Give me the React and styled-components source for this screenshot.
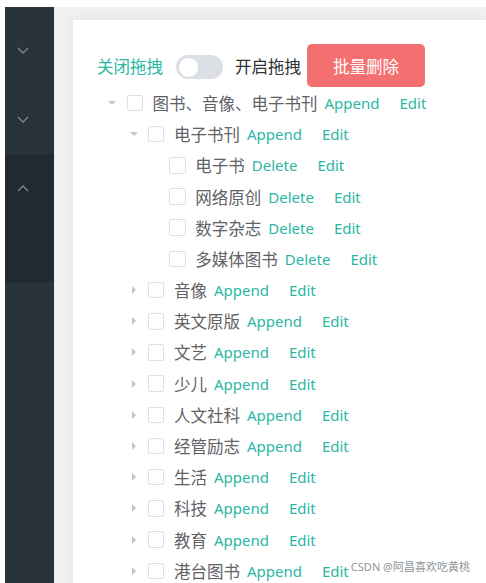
import React, { useState } from "react";
import styled, { createGlobalStyle } from "styled-components";

const GlobalStyle = createGlobalStyle`
  html, body {
    margin: 0;
    padding: 0;
    background: #fff;
    overflow: hidden;
  }
  * {
    box-sizing: border-box;
  }
`;

const TEAL = "#2bb7a3";

const treeData = [
  {
    label: "图书、音像、电子书刊",
    open: true,
    children: [
      {
        label: "电子书刊",
        open: true,
        children: [
          { label: "电子书" },
          { label: "网络原创" },
          { label: "数字杂志" },
          { label: "多媒体图书" },
        ],
      },
      { label: "音像", children: [{ label: "-" }] },
      { label: "英文原版", children: [{ label: "-" }] },
      { label: "文艺", children: [{ label: "-" }] },
      { label: "少儿", children: [{ label: "-" }] },
      { label: "人文社科", children: [{ label: "-" }] },
      { label: "经管励志", children: [{ label: "-" }] },
      { label: "生活", children: [{ label: "-" }] },
      { label: "科技", children: [{ label: "-" }] },
      { label: "教育", children: [{ label: "-" }] },
      { label: "港台图书", children: [{ label: "-" }] },
    ],
  },
];

const Chevron = ({ up }) => (
  <svg width="12" height="7" viewBox="0 0 12 7">
    <polyline
      points={up ? "1,6 6,1 11,6" : "1,1 6,6 11,1"}
      fill="none"
      stroke="#7d868e"
      strokeWidth="1.4"
    />
  </svg>
);

const TreeNode = ({ node, level }) => {
  const hasChildren = !!node.children;
  const isLeaf = level >= 2;
  return (
    <>
      <Row level={level}>
        <Caret>{hasChildren && <Triangle open={node.open} />}</Caret>
        <Checkbox />
        <Label>{node.label}</Label>
        <LinkBtn>{isLeaf ? "Delete" : "Append"}</LinkBtn>
        <LinkBtn>Edit</LinkBtn>
      </Row>
      {node.open &&
        node.children.map((c) => (
          <TreeNode key={c.label} node={c} level={level + 1} />
        ))}
    </>
  );
};

const App = () => {
  const [drag, setDrag] = useState(false);

  return (
    <Page>
      <GlobalStyle />
      <Sidebar>
        <MenuItem>
          <Chevron />
        </MenuItem>
        <MenuItem>
          <Chevron />
        </MenuItem>
        <MenuGroup>
          <MenuItem>
            <Chevron up />
          </MenuItem>
        </MenuGroup>
      </Sidebar>
      <Main>
        <Card>
          <Toolbar>
            <SwitchText active={!drag}>关闭拖拽</SwitchText>
            <Switch on={drag} onClick={() => setDrag(!drag)}>
              <Knob on={drag} />
            </Switch>
            <SwitchText active={drag}>开启拖拽</SwitchText>
            <DangerButton>批量删除</DangerButton>
          </Toolbar>
          <Tree>
            {treeData.map((n) => (
              <TreeNode key={n.label} node={n} level={0} />
            ))}
          </Tree>
        </Card>
      </Main>
      <Watermark>CSDN @阿昌喜欢吃黄桃</Watermark>
    </Page>
  );
};

const Page = styled.div`
  position: relative;
  display: flex;
  height: 100vh;
  padding: 7px 0 0 5px;
  font-family: "Noto Sans", "Noto Sans CJK SC", sans-serif;
`;

const Sidebar = styled.aside`
  width: 49px;
  flex-shrink: 0;
  background: #28333a;
  padding-top: 9px;
`;

const MenuItem = styled.div`
  height: 69px;
  display: flex;
  align-items: center;
  padding-left: 12px;
`;

const MenuGroup = styled.div`
  height: 128px;
  background: #212a30;
`;

const Main = styled.main`
  flex: 1;
  display: flex;
  background: #eef0f2;
  padding: 13px 0 0 19px;
  min-width: 0;
`;

const Card = styled.section`
  flex: 1;
  background: #fff;
  box-shadow: 0 0 10px rgba(0, 0, 0, 0.07);
  padding: 24px 0 0 24px;
  overflow: hidden;
`;

const Toolbar = styled.div`
  display: flex;
  align-items: center;
  height: 43px;
`;

const SwitchText = styled.span`
  font-size: 16.5px;
  color: ${(p) => (p.active ? TEAL : "#303133")};
  line-height: 1;
  margin-top: 3px;
`;

const Switch = styled.span`
  position: relative;
  width: 47px;
  height: 24px;
  border-radius: 12px;
  background: ${(p) => (p.on ? TEAL : "#dcdfe6")};
  margin: 3px 12px 0 13px;
  cursor: pointer;
`;

const Knob = styled.span`
  position: absolute;
  top: 2.5px;
  left: ${(p) => (p.on ? "25.5px" : "2.5px")};
  width: 19px;
  height: 19px;
  border-radius: 50%;
  background: #fff;
`;

const DangerButton = styled.button`
  width: 118px;
  height: 43px;
  margin-left: 6px;
  border: none;
  border-radius: 5px;
  background: #f47070;
  color: #fff;
  font-family: inherit;
  font-size: 16.5px;
  cursor: pointer;
`;

const Tree = styled.div`
  padding-top: 0.4px;
`;

const Row = styled.div`
  display: flex;
  align-items: center;
  height: 31.2px;
  padding-left: ${(p) => p.level * 21.4 + 1}px;
  white-space: nowrap;
`;

const Caret = styled.span`
  width: 28.5px;
  display: flex;
  justify-content: center;
  align-items: center;
`;

const Triangle = styled.span`
  width: 0;
  height: 0;
  border-style: solid;
  border-color: transparent;
  ${(p) =>
    p.open
      ? `border-width: 4.5px 4px 0 4px; border-top-color: #c0c4cc;`
      : `border-width: 4px 0 4px 4.5px; border-left-color: #c0c4cc;`}
`;

const Checkbox = styled.span`
  width: 16.5px;
  height: 16.5px;
  border: 1px solid #dcdfe6;
  border-radius: 2px;
  background: #fff;
  margin-right: 9.5px;
`;

const Label = styled.span`
  font-size: 16.5px;
  color: #606266;
  margin-right: 7px;
`;

const LinkBtn = styled.span`
  font-size: 15px;
  color: ${TEAL};
  margin-right: 20px;
  cursor: pointer;
`;

const Watermark = styled.div`
  position: absolute;
  right: 16px;
  bottom: 9px;
  font-size: 11px;
  color: #8f959b;
  background: rgba(255, 255, 255, 0.6);
`;

export default App;
